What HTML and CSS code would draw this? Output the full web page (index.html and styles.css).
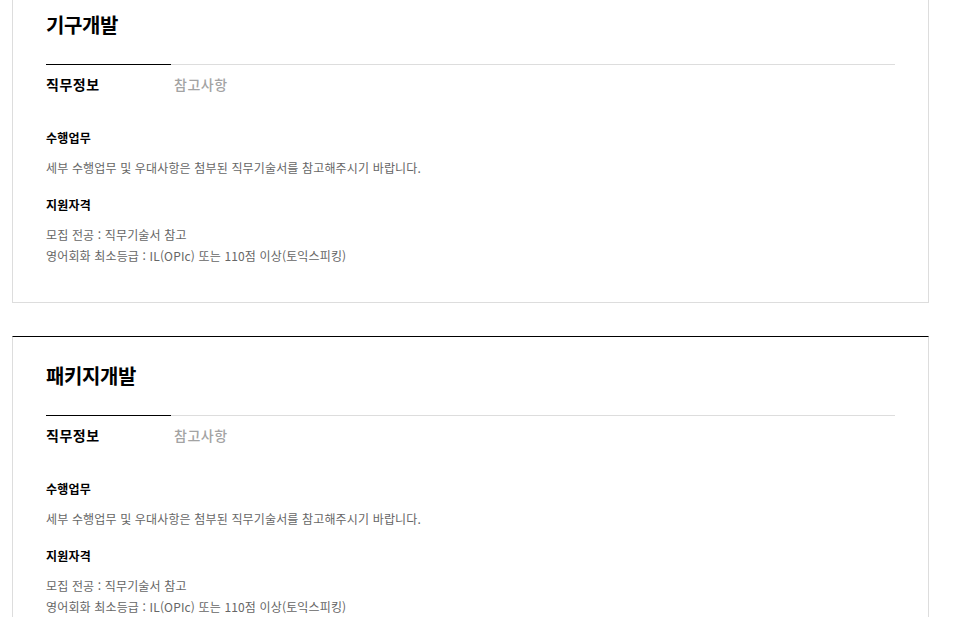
FILE: index.html
```html
<!DOCTYPE html>
<html lang="ko">
<head>
    <meta charset="UTF-8">
    <meta name="viewport" content="width=device-width, initial-scale=1.0">
    <title>직무소개</title>
    <link rel="stylesheet" href="styles.css">
</head>
<body>
    <div class="job-list">
        <div class="job-card">
            <h2 class="job-title">기구개발</h2>
            <ul class="tabs">
                <li class="tab active">직무정보</li>
                <li class="tab">참고사항</li>
            </ul>
            <div class="job-info">
                <h3 class="info-head">수행업무</h3>
                <p class="info-text">세부 수행업무 및 우대사항은 첨부된 직무기술서를 참고해주시기 바랍니다.</p>
                <h3 class="info-head">지원자격</h3>
                <p class="info-text">모집 전공 : 직무기술서 참고<br>영어회화 최소등급 : IL(OPIc) 또는 110점 이상(토익스피킹)</p>
            </div>
        </div>

        <div class="job-card">
            <h2 class="job-title">패키지개발</h2>
            <ul class="tabs">
                <li class="tab active">직무정보</li>
                <li class="tab">참고사항</li>
            </ul>
            <div class="job-info">
                <h3 class="info-head">수행업무</h3>
                <p class="info-text">세부 수행업무 및 우대사항은 첨부된 직무기술서를 참고해주시기 바랍니다.</p>
                <h3 class="info-head">지원자격</h3>
                <p class="info-text">모집 전공 : 직무기술서 참고<br>영어회화 최소등급 : IL(OPIc) 또는 110점 이상(토익스피킹)</p>
            </div>
        </div>
    </div>
</body>
</html>
```

FILE: styles.css
```css
body{
    margin: 0;
    background-color: #fff;
    font-family: "Noto Sans CJK KR", "Noto Sans", sans-serif;
    color: #000;
}
.job-list{
    width: 917px;
    margin-left: 12px;
    margin-top: -15px;
}
.job-card{
    border: 1px solid #ddd;
    border-top-color: #000;
    padding: 25px 33px 36px;
    margin-bottom: 33px;
}
.job-title{
    margin: 0;
    font-size: 20px;
    line-height: 28px;
    font-weight: 700;
    letter-spacing: -0.4px;
}
.tabs{
    display: flex;
    list-style: none;
    margin: 25px 0 0;
    padding: 0;
    border-top: 1px solid #ddd;
}
.tab{
    width: 125px;
    margin-top: -1px;
    border-top: 1px solid transparent;
    padding: 9px 0 0 3px;
    box-sizing: border-box;
    font-size: 14px;
    line-height: 20px;
    font-weight: 500;
    color: #a3a3a3;
    letter-spacing: 0.5px;
}
.tab.active{
    padding-left: 0;
    border-top-color: #000;
    color: #000;
    font-weight: 700;
}
.job-info{
    padding-top: 35px;
}
.info-head{
    margin: 0;
    font-size: 12px;
    line-height: 18px;
    font-weight: 700;
    letter-spacing: 0.25px;
}
.info-text{
    margin: 10px 0 18px;
    font-size: 12px;
    line-height: 21px;
    color: #666;
    letter-spacing: 0.15px;
}
.info-text:last-child{
    margin-bottom: 0;
}
```
